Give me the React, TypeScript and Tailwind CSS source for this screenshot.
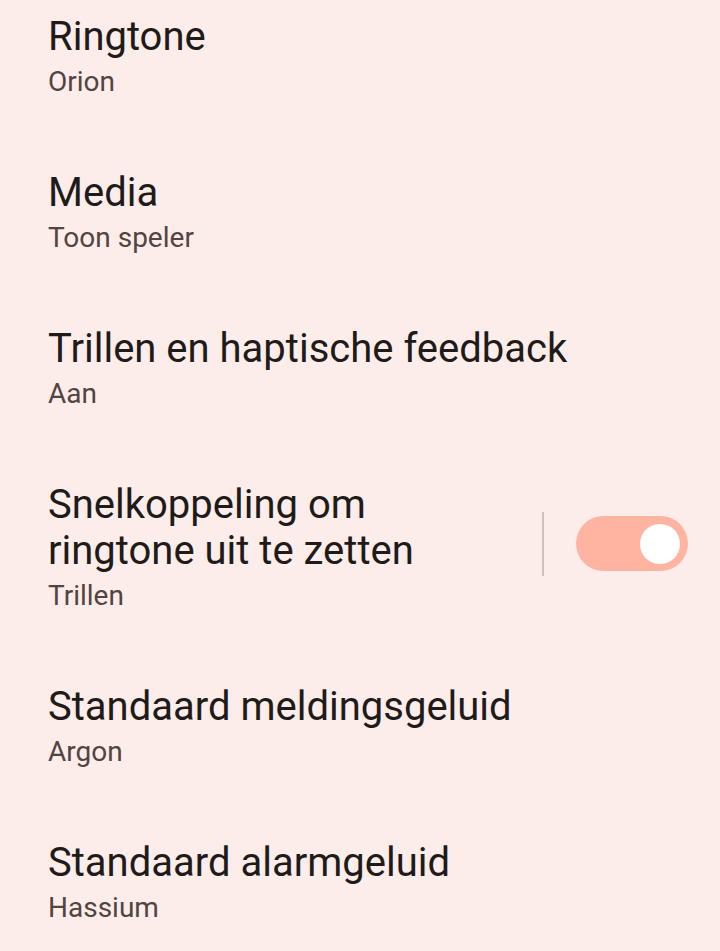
import React from "react";

interface SettingRow {
  title: string;
  summary: string;
  toggle?: boolean;
}

const rows: SettingRow[] = [
  { title: "Ringtone", summary: "Orion" },
  { title: "Media", summary: "Toon speler" },
  { title: "Trillen en haptische feedback", summary: "Aan" },
  {
    title: "Snelkoppeling om ringtone uit te zetten",
    summary: "Trillen",
    toggle: true,
  },
  { title: "Standaard meldingsgeluid", summary: "Argon" },
  { title: "Standaard alarmgeluid", summary: "Hassium" },
];

const Toggle: React.FC<{ on: boolean }> = ({ on }) => (
  <div
    className={`w-[112px] h-[55px] rounded-full flex items-center px-[8px] ${
      on ? "bg-[#ffb4a2] justify-end" : "bg-[#e7d6d3] justify-start"
    }`}
  >
    <div className="w-[40px] h-[40px] rounded-full bg-white" />
  </div>
);

const Row: React.FC<{ row: SettingRow }> = ({ row }) => (
  <div className="flex items-center pl-[48px] pr-[32px] pt-[36px] pb-[35px]">
    <div className="flex-1 min-w-0">
      <div
        className={`text-[40px] leading-[46px] text-[#201a19] ${
          row.toggle ? "max-w-[420px]" : ""
        }`}
      >
        {row.title}
      </div>
      <div className="text-[28px] leading-[34px] mt-[5px] text-[#534341]">
        {row.summary}
      </div>
    </div>
    {row.toggle && (
      <div className="flex items-center mb-[8px]">
        <div className="w-[2px] h-[64px] bg-[#d3c0bc] mr-[32px]" />
        <Toggle on />
      </div>
    )}
  </div>
);

export default function App() {
  return (
    <div
      className="w-[720px] h-[951px] overflow-hidden bg-[#fcedea]"
      style={{ fontFamily: "Roboto, 'Noto Sans', sans-serif" }}
    >
      <div className="-mt-[22px]">
        {rows.map((row) => (
          <Row key={row.title} row={row} />
        ))}
      </div>
    </div>
  );
}
